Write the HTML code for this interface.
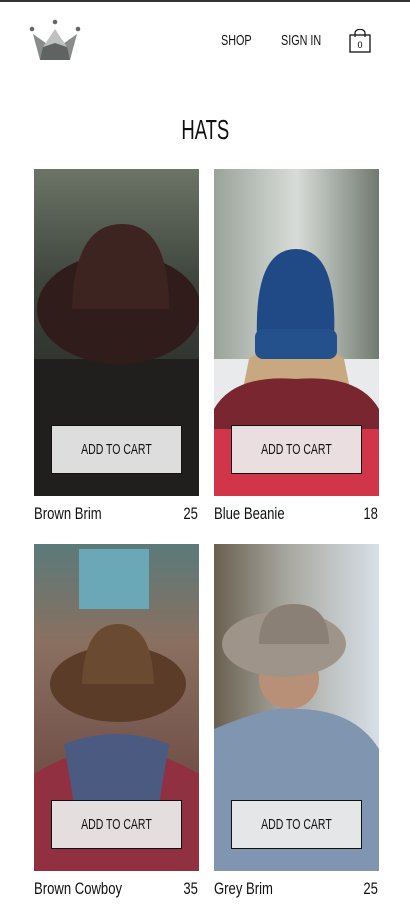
<!DOCTYPE html>
<html><head><meta charset="utf-8"><style>
*{margin:0;padding:0;box-sizing:border-box}
body{width:410px;height:912px;background:#fff;font-family:"Liberation Sans Narrow","Liberation Sans",sans-serif;color:#111;position:relative;overflow:hidden}
.top{position:absolute;left:0;top:0;width:410px;height:2px;background:#333}
.n{position:absolute;font-size:15px;display:inline-block;transform:scaleX(.72);transform-origin:left top;white-space:nowrap}
.card{position:absolute;width:165px;height:327px;overflow:hidden}
.card svg{position:absolute;left:0;top:0}
.btn{position:absolute;left:17px;top:256px;width:131px;height:49px;border:1px solid #111;background:rgba(236,236,236,.93);font-size:15px;text-align:center;line-height:47px}
.btn span{display:inline-block;transform:scaleX(.7)}
.lab{position:absolute;font-size:17px}
.lab span{display:inline-block;transform:scaleX(.77);transform-origin:left top}
.r span{transform-origin:right top}
</style></head><body>
<div class="top"></div>
<svg style="position:absolute;left:0;top:0" width="100" height="70">
<circle cx="32" cy="29" r="2.3" fill="#666"/><circle cx="55" cy="22" r="2.3" fill="#666"/><circle cx="78" cy="29" r="2.3" fill="#666"/>
<polygon points="33,34 50,46 40,60" fill="#8a8c8c"/><polygon points="77,34 60,46 70,60" fill="#8a8c8c"/>
<polygon points="55,29 43,47 67,47" fill="#bfc1c1"/>
<polygon points="43,47 55,43 67,47 70,60 40,60" fill="#5f6362"/>
</svg>
<div class="n" style="left:221px;top:32px">SHOP</div>
<div class="n" style="left:281px;top:32px">SIGN IN</div>
<svg style="position:absolute;left:349px;top:29px" width="22" height="24" viewBox="0 0 22 24"><path d="M6 8V4a4 3 0 0 1 10 0v4" fill="none" stroke="#111" stroke-width="1.2"/><rect x="1" y="6" width="20" height="17" fill="none" stroke="#111" stroke-width="1.3"/><text x="11" y="19" font-size="9" text-anchor="middle" font-family="Liberation Sans">0</text></svg>
<div style="position:absolute;left:0;width:410px;top:114px;text-align:center;font-size:28px"><span style="display:inline-block;transform:scaleX(.66)">HATS</span></div>

<div class="card" style="left:34px;top:169px">
<svg width="165" height="327"><defs><linearGradient id="g1" x1="0" y1="0" x2="0" y2="1"><stop offset="0" stop-color="#6b7466"/><stop offset=".35" stop-color="#3e443c"/><stop offset="1" stop-color="#1c1b1a"/></linearGradient></defs>
<rect width="165" height="327" fill="url(#g1)"/><rect x="0" y="190" width="165" height="137" fill="#201f1e"/>
<ellipse cx="85" cy="140" rx="82" ry="55" fill="#301c1a"/><path d="M38 140 Q40 55 88 55 Q135 55 135 140Z" fill="#3e2421"/></svg>
<div class="btn"><span>ADD TO CART</span></div></div>

<div class="card" style="left:214px;top:169px">
<svg width="165" height="327"><defs><linearGradient id="g2" x1="0" y1="0" x2="1" y2="0"><stop offset="0" stop-color="#9aa39a"/><stop offset=".5" stop-color="#d8dcd8"/><stop offset="1" stop-color="#707a70"/></linearGradient></defs>
<rect width="165" height="327" fill="url(#g2)"/><rect y="190" width="165" height="137" fill="#e8eaec"/>
<path d="M35 190 Q82 150 130 190 L140 240 L25 240Z" fill="#c8a880"/>
<path d="M0 240 Q20 205 82 210 Q145 205 165 240 L165 327 L0 327Z" fill="#7a2630"/>
<path d="M0 260 L165 260 L165 327 L0 327Z" fill="#d0354a"/>
<path d="M43 170 Q40 80 82 80 Q124 80 120 170Z" fill="#1f4a86"/><rect x="41" y="160" width="82" height="30" rx="8" fill="#24508c"/></svg>
<div class="btn"><span>ADD TO CART</span></div></div>

<div class="lab" style="left:34px;top:504px"><span>Brown Brim</span></div>
<div class="lab r" style="right:212px;top:504px"><span>25</span></div>
<div class="lab" style="left:214px;top:504px"><span>Blue Beanie</span></div>
<div class="lab r" style="right:32px;top:504px"><span>18</span></div>

<div class="card" style="left:34px;top:544px">
<svg width="165" height="327"><defs><linearGradient id="g3" x1="0" y1="0" x2="0" y2="1"><stop offset="0" stop-color="#5a7a7a"/><stop offset=".3" stop-color="#8a7060"/><stop offset="1" stop-color="#603838"/></linearGradient></defs>
<rect width="165" height="327" fill="url(#g3)"/><rect x="45" y="5" width="70" height="60" fill="#6aa8b8"/>
<path d="M0 230 Q80 180 165 230 L165 327 L0 327Z" fill="#903040"/><path d="M30 200 Q82 180 135 200 L125 260 L40 260Z" fill="#4a5a80"/>
<ellipse cx="84" cy="140" rx="68" ry="38" fill="#5a3c28"/><path d="M48 140 Q50 80 84 80 Q118 80 120 140Z" fill="#6a4a30"/></svg>
<div class="btn"><span>ADD TO CART</span></div></div>

<div class="card" style="left:214px;top:544px">
<svg width="165" height="327"><defs><linearGradient id="g4" x1="0" y1="0" x2="1" y2="0"><stop offset="0" stop-color="#6a6050"/><stop offset=".45" stop-color="#a8a8a0"/><stop offset="1" stop-color="#d8e0e8"/></linearGradient></defs>
<rect width="165" height="327" fill="url(#g4)"/>
<path d="M0 185 Q60 160 82 165 Q140 165 165 205 L165 327 L0 327Z" fill="#8096b0"/>
<ellipse cx="75" cy="135" rx="30" ry="30" fill="#b89078"/>
<ellipse cx="70" cy="100" rx="62" ry="33" fill="#9e948a"/><path d="M45 100 Q45 60 80 60 Q115 60 115 100Z" fill="#8a8076"/></svg>
<div class="btn"><span>ADD TO CART</span></div></div>

<div class="lab" style="left:34px;top:879px"><span>Brown Cowboy</span></div>
<div class="lab r" style="right:212px;top:879px"><span>35</span></div>
<div class="lab" style="left:214px;top:879px"><span>Grey Brim</span></div>
<div class="lab r" style="right:32px;top:879px"><span>25</span></div>
</body></html>
